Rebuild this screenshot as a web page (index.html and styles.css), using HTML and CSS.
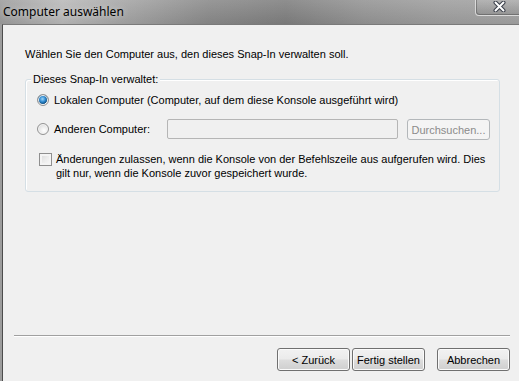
FILE: index.html
```html
<!DOCTYPE html>
<html lang="de">
  <head>
    <meta charset="UTF-8" />
    <meta name="viewport" content="width=device-width, initial-scale=1.0" />
    <link rel="stylesheet" href="styles.css">
    <title>Computer auswählen</title>
  </head>
  <body>
    <div class="window">
      <div class="titlebar">
        <span class="titlebar__text">Computer auswählen</span>
        <button class="titlebar__close" aria-label="Schließen">
          <svg width="13" height="11" viewBox="0 0 13 11">
            <path d="M2.5 1.5 L10.5 9.5 M10.5 1.5 L2.5 9.5" stroke="#3a3f4a" stroke-width="4" stroke-linecap="round" fill="none" />
            <path d="M2.5 1.5 L10.5 9.5 M10.5 1.5 L2.5 9.5" stroke="#ffffff" stroke-width="2" stroke-linecap="round" fill="none" />
          </svg>
        </button>
      </div>
      <div class="client">
        <p class="intro">Wählen Sie den Computer aus, den dieses Snap-In verwalten soll.</p>
        <fieldset class="group">
          <legend class="group__legend">Dieses Snap-In verwaltet:</legend>
          <label class="row row_first">
            <input class="radio" type="radio" name="target" checked />
            <span>Lokalen Computer (Computer, auf dem diese Konsole ausgeführt wird)</span>
          </label>
          <div class="row row_other">
            <label class="row__label">
              <input class="radio" type="radio" name="target" />
              <span>Anderen Computer:</span>
            </label>
            <input class="textbox" type="text" disabled />
            <button class="button button_browse" disabled>Durchsuchen...</button>
          </div>
          <label class="row row_check">
            <input class="check" type="checkbox" />
            <span class="row__text">Änderungen zulassen, wenn die Konsole von der Befehlszeile aus aufgerufen wird. Dies gilt nur, wenn die Konsole zuvor gespeichert wurde.</span>
          </label>
        </fieldset>
        <div class="spacer"></div>
        <div class="separator"></div>
        <div class="actions">
          <button class="button">&lt; Zurück</button>
          <button class="button">Fertig stellen</button>
          <button class="button button_cancel">Abbrechen</button>
        </div>
      </div>
    </div>
  </body>
</html>
```

FILE: styles.css
```css
*,
*::after,
*::before {
  box-sizing: border-box;
  margin: 0;
  padding: 0;
}

body {
  width: 519px;
  height: 381px;
  overflow: hidden;
  font-family: "Liberation Sans", Arial, sans-serif;
  font-size: 11px;
  color: #000;
}

.window {
  display: flex;
  flex-direction: column;
  height: 381px;
  background: linear-gradient(
    to right,
    #9c9c9c 0%,
    #b9b9b9 12%,
    #a3a3a3 25%,
    #8a8a8a 40%,
    #7f7f7f 55%,
    #949494 70%,
    #9e9e9e 85%,
    #a2a2a2 100%
  );
}

.titlebar {
  display: flex;
  align-items: flex-start;
  height: 24px;
  background: linear-gradient(rgba(255, 255, 255, 0.12), rgba(0, 0, 0, 0.05));
}

.titlebar__text {
  padding: 4px 0 0 3px;
  font-family: "Noto Sans", "Open Sans", sans-serif;
  font-size: 12px;
  line-height: 16px;
  color: #000;
  text-shadow: 0 0 6px rgba(255, 255, 255, 0.6);
}

.titlebar__close {
  display: flex;
  align-items: center;
  justify-content: center;
  margin-left: auto;
  width: 44px;
  height: 16px;
  padding: 0 0 2px 4px;
  border: 1px solid rgba(230, 230, 230, 0.8);
  border-top: none;
  border-right: none;
  border-radius: 0 0 0 4px;
  background: linear-gradient(rgba(255, 255, 255, 0.1), rgba(0, 0, 0, 0.08));
  box-shadow: inset 1px -1px 0 rgba(70, 70, 70, 0.45);
}

.client {
  display: flex;
  flex: 1;
  flex-direction: column;
  margin-left: 2px;
  padding: 23px 19px 10px 22px;
  border-left: 1px solid #4c4c4c;
  border-top: 1px solid #7a7a7a;
  background: #f0f0f0;
}

.intro {
  line-height: 13px;
}

.group {
  margin-top: 12px;
  padding: 6px 0 11px 11px;
  border: 1px solid #d5dfe5;
  border-radius: 3px;
  box-shadow: inset 1px 1px 0 #fff;
}

.group__legend {
  margin-left: -6px;
  padding: 0 2px;
  line-height: 13px;
  background: #f0f0f0;
}

.row {
  display: flex;
  align-items: center;
}

.row_first {
  height: 16px;
}

.row_other {
  margin-top: 11px;
  align-items: flex-start;
}

.row__label {
  display: flex;
  align-items: center;
  width: 130px;
  height: 20px;
}

.row_check {
  margin-top: 12px;
  align-items: flex-start;
}

.row__text {
  width: 430px;
  line-height: 14px;
}

.radio {
  appearance: none;
  flex: none;
  width: 12px;
  height: 12px;
  margin-right: 5px;
  border: 1px solid #939393;
  border-radius: 50%;
  background: radial-gradient(circle at 60% 65%, #ffffff 0%, #e6e6e6 55%, #cfcfcf 100%);
  box-shadow: inset 0 0 0 1px #f4f4f4;
}

.radio:checked {
  background: radial-gradient(circle at 45% 40%, #9fd6f8 0%, #2f8ad0 35%, #0e4b7c 62%, #f2f2f2 66%, #dcdcdc 100%);
}

.check {
  appearance: none;
  flex: none;
  width: 13px;
  height: 13px;
  margin: 1px 4px 0 2px;
  border: 1px solid #8f8f8f;
  background: linear-gradient(135deg, #d7d7d7 0%, #ececec 50%, #fbfbfb 100%);
  box-shadow: inset 0 0 0 2px #f4f4f4;
}

.textbox {
  width: 231px;
  height: 20px;
  border: 1px solid #b5b5b5;
  border-radius: 2px;
  background: #f0f0f0;
}

.button {
  width: 73px;
  height: 23px;
  border: 1px solid #707070;
  border-radius: 3px;
  font-family: "Liberation Sans", Arial, sans-serif;
  font-size: 11px;
  color: #000;
  background: linear-gradient(#f2f2f2 0%, #ebebeb 48%, #dddddd 52%, #cfcfcf 100%);
  box-shadow: inset 0 0 0 1px #fbfbfb;
}

.button_browse {
  width: 83px;
  height: 21px;
  margin-left: 9px;
  border-color: #b3b7ba;
  color: #8b8b8b;
  background: #f4f4f4;
  box-shadow: none;
}

.spacer {
  flex: 1;
}

.separator {
  margin: 0 -10px 11px -11px;
  border-top: 1px solid #a0a0a0;
  border-bottom: 1px solid #ffffff;
}

.actions {
  display: flex;
  justify-content: flex-end;
  gap: 2px;
  margin-right: -10px;
}

.button_cancel {
  margin-left: 10px;
}
```
